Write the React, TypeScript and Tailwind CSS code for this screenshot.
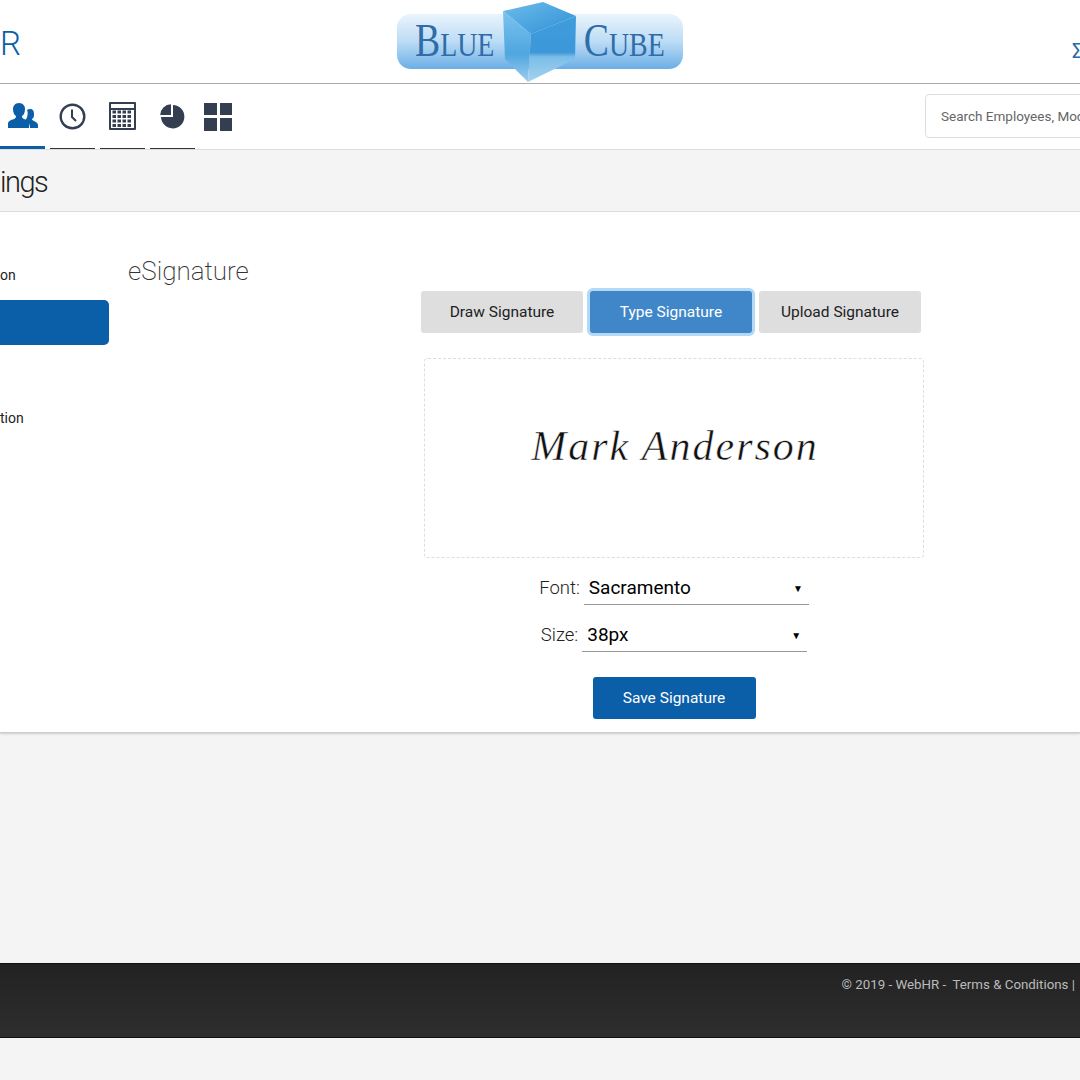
const navy = "#333f50";

function UsersIcon() {
  return (
    <svg className="mt-[2px]" width="30" height="26" viewBox="0 0 30 26" fill="#0b5ea8">
      <path d="M0 25v-4c0-3 3-4 6-5 2-1 2-2 2-3-2-1-3-4-3-7 0-3 2-6 6-6s6 3 6 6c0 3-1 6-3 7 0 1 0 2 2 3 3 1 5 2 5 5v4z" />
      <path d="M22 25h8v-3c0-2-2-3-4-4-1-.5-2-1-2-2 2-1 2-3 2-5 0-3-1-5-4-5-1 0-2 .3-3 1 .5 1 .7 2 .7 3 0 3-1 6-2.500 7.500 0 .5.500 1 1.300 1.300 2.500 1 3.500 3 3.500 6z" />
    </svg>
  );
}

function ClockIcon() {
  return (
    <svg width="27" height="27" viewBox="0 0 27 27" fill="none" stroke={navy}>
      <circle cx="13.500" cy="13.500" r="11.800" strokeWidth="2.400" />
      <path d="M13 6.500v7.500l4 4" strokeWidth="2" />
    </svg>
  );
}

function CalcIcon() {
  return (
    <svg width="27" height="28" viewBox="0 0 27 28" fill={navy}>
      <path fillRule="evenodd" d="M1 0h25a1 1 0 0 1 1 1v26a1 1 0 0 1-1 1H1a1 1 0 0 1-1-1V1a1 1 0 0 1 1-1zm1 2v4h23V2zm0 6v18h23V8z" />
      {[9, 13.500, 18, 22.500].map((y) => (
        <g key={y}>
          {[3.500, 8.500, 13.500, 18.500].map((x) => (
            <rect key={x} x={x} y={y - 0.5} width="3.500" height="3" />
          ))}
        </g>
      ))}
    </svg>
  );
}

function PieIcon() {
  return (
    <svg width="25" height="25" viewBox="0 0 25 25" fill={navy}>
      <path d="M11 0.200V11H0.200A11 11 0 0 1 11 0.200z" />
      <path d="M13 1a11.700 11.700 0 1 1-12 12h12z" />
    </svg>
  );
}

function GridIcon() {
  return (
    <div className="grid h-7 w-7 grid-cols-2 grid-rows-2 gap-[3px]">
      <div className="bg-[#333f50]" />
      <div className="bg-[#333f50]" />
      <div className="bg-[#333f50]" />
      <div className="bg-[#333f50]" />
    </div>
  );
}

function Logo() {
  return (
    <div className="relative flex h-[55px] w-[286px] items-center justify-between rounded-[14px] bg-gradient-to-b from-[#eaf4fc] via-[#bcdcf5] to-[#6aaee6] pl-[18px] pr-[18px]">
      <span className="inline-block origin-left scale-x-[0.82] whitespace-nowrap font-['Liberation_Serif',serif] text-[46px] leading-none text-[#2f6ca8]">
        B<span className="text-[34px]">LUE</span>
      </span>
      <span className="inline-block origin-right scale-x-[0.82] whitespace-nowrap font-['Liberation_Serif',serif] text-[46px] leading-none text-[#2f6ca8]">
        C<span className="text-[34px]">UBE</span>
      </span>
      <svg className="absolute left-[106px] top-[-12px]" width="75" height="80" viewBox="0 0 75 80">
        <defs>
          <linearGradient id="cubeTop" x1="0" y1="0" x2="1" y2="1">
            <stop offset="0" stopColor="#6cbdec" />
            <stop offset="1" stopColor="#2f8fd3" />
          </linearGradient>
          <linearGradient id="cubeRight" x1="0" y1="0" x2="0" y2="1">
            <stop offset="0" stopColor="#3f9ddd" />
            <stop offset="0.55" stopColor="#3d97d8" />
            <stop offset="0.62" stopColor="#7bbde8" />
            <stop offset="1" stopColor="#a5d3f0" />
          </linearGradient>
          <linearGradient id="cubeLeft" x1="0" y1="0" x2="0" y2="1">
            <stop offset="0" stopColor="#7cc3ee" />
            <stop offset="0.6" stopColor="#4fa6e0" />
            <stop offset="1" stopColor="#9ccdee" />
          </linearGradient>
        </defs>
        <path d="M0 9 40 0l33 14-45 18z" fill="url(#cubeTop)" />
        <path d="M0 9l28 23-3 48L2 57z" fill="url(#cubeLeft)" />
        <path d="M28 32 73 14l-1 43-47 23z" fill="url(#cubeRight)" />
      </svg>
    </div>
  );
}

function NavTab({ active, children }: { active?: boolean; children: React.ReactNode }) {
  return (
    <div className={`flex h-[65px] w-[45px] items-center justify-center ${active ? "border-b-[3px] border-[#0b5ea8]" : "border-b border-[#333]"}`}>
      {children}
    </div>
  );
}

function SigTab({ active, children }: { active?: boolean; children: React.ReactNode }) {
  return (
    <button
      className={`h-[42px] w-[162px] rounded-[3px] pt-[2px] text-[15.500px] ${
        active ? "bg-[#3f87c9] text-white shadow-[0_0_0_3px_#b5d8f5]" : "bg-[#dedede] text-[#222]"
      }`}
    >
      {children}
    </button>
  );
}

function SelectRow({ label, value, width }: { label: string; value: string; width: string }) {
  return (
    <div className="flex items-center justify-center gap-[4px]">
      <span className="pt-[2px] text-[18.500px] font-light text-[#222]">{label}</span>
      <div className={`flex h-[34px] items-center justify-between border-b border-[#999] pl-[5px] pr-[6px] pt-[2px] text-[19px] text-black ${width}`}>
        <span>{value}</span>
        <span className="text-[10px]">▼</span>
      </div>
    </div>
  );
}

export default function App() {
  return (
    <div className="flex h-[1080px] w-[1080px] flex-col overflow-hidden bg-[#f4f4f4] font-['Roboto',sans-serif]">
      <header className="flex h-[84px] shrink-0 items-center justify-between border-b border-[#aaa] bg-white">
        <span className="w-[111px] pt-[4px] text-[33px] font-light leading-none text-[#0b5ea8]">R</span>
        <div className="mt-[-1px] flex h-[55px] items-center">
          <Logo />
        </div>
        <span className="w-[111px] overflow-hidden pl-[103px] pt-[18px] text-[20px] leading-none text-[#2a6aa5]">Σ</span>
      </header>

      <nav className="flex h-[66px] shrink-0 items-start border-b border-[#ddd] bg-white">
        <div className="flex gap-[5px]">
          <NavTab active><UsersIcon /></NavTab>
          <NavTab><ClockIcon /></NavTab>
          <NavTab><CalcIcon /></NavTab>
          <NavTab><PieIcon /></NavTab>
        </div>
        <div className="ml-[9px] flex h-[65px] items-center">
          <GridIcon />
        </div>
        <div className="ml-[693px] mt-[10px] flex h-[44px] w-[300px] shrink-0 items-center rounded-[4px] border border-[#ddd] pl-[15px] text-[13.500px] whitespace-nowrap text-[#666]">
          Search Employees, Modules
        </div>
      </nav>

      <div className="flex h-[62px] shrink-0 items-center border-b border-[#ddd]">
        <h1 className="pt-[3px] text-[29px] font-light leading-none tracking-[-1.500px] text-[#222]">ings</h1>
      </div>

      <main className="flex h-[521px] shrink-0 border-b border-[#ccc] bg-white shadow-[0_1px_2px_#ccc]">
        <aside className="w-[109px] shrink-0 pt-[53px] text-[14px] text-[#222]">
          <div className="h-[35px] leading-[20px]">on</div>
          <div className="h-[45px] rounded-r-[5px] bg-[#0b5ea8]" />
          <div className="pt-[63px] leading-[20px]">tion</div>
        </aside>
        <h2 className="ml-[19px] w-[296px] shrink-0 pt-[44px] text-[26px] font-extralight leading-[30px] text-[#333]">eSignature</h2>
        <section className="flex w-[500px] flex-col">
          <div className="ml-[-3px] flex gap-[7px] pt-[79px]">
            <SigTab>Draw Signature</SigTab>
            <SigTab active>Type Signature</SigTab>
            <SigTab>Upload Signature</SigTab>
          </div>
          <div className="mt-[25px] flex h-[200px] items-center justify-center rounded-[4px] border border-dashed border-[#ddd] pb-[24px] pl-[2px]">
            <span className="font-['Liberation_Serif',serif] text-[42px] italic leading-none tracking-[2px] text-[#111] [-webkit-text-stroke:0.5px_white]">Mark Anderson</span>
          </div>
          <div className="mt-[13px] flex flex-col gap-[13px]">
            <SelectRow label="Font:" value="Sacramento" width="w-[225px]" />
            <SelectRow label="Size:" value="38px" width="w-[225px]" />
          </div>
          <button className="mx-auto mt-[25px] h-[42px] w-[163px] rounded-[3px] bg-[#0b5ea8] pt-[2px] text-[15.500px] text-white">Save Signature</button>
        </section>
      </main>

      <div className="h-[230px] shrink-0" />

      <footer className="flex h-[75px] shrink-0 justify-end border-y border-[#111] bg-gradient-to-b from-[#222] to-[#2e2e2e] pr-[5px] pt-[12px] text-[13.300px] text-[#bbb]">
        <span className="whitespace-pre leading-[18px]">© 2019 - WebHR -  Terms &amp; Conditions |</span>
      </footer>
    </div>
  );
}
